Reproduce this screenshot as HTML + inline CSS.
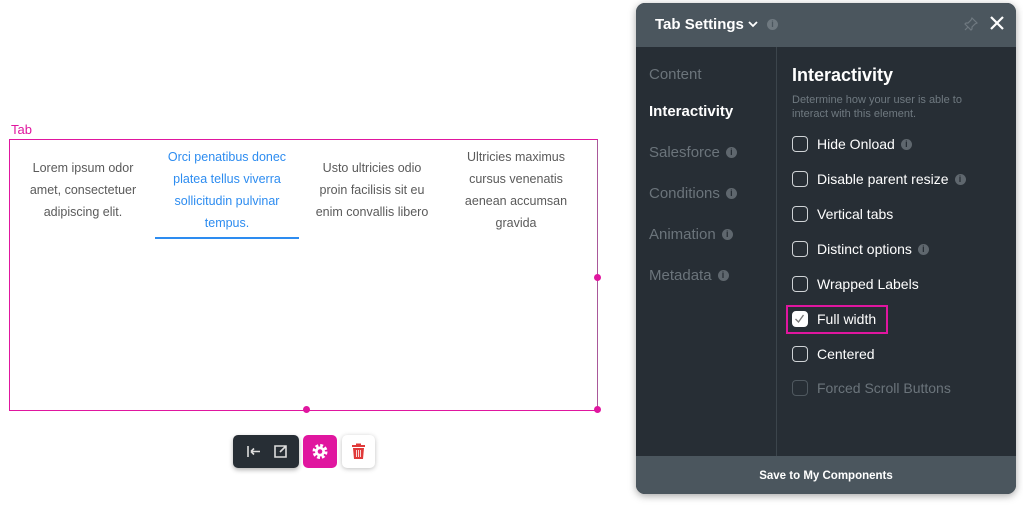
<!DOCTYPE html>
<html><head><style>
*{margin:0;padding:0;box-sizing:border-box}
body{width:1023px;height:506px;background:#fff;font-family:"Liberation Sans",sans-serif;position:relative;overflow:hidden}
.abs{position:absolute}
.tabtxt{position:absolute;text-align:center;font-size:12.5px;line-height:22px;color:#5a5a5a}
.panel{left:636px;top:3px;width:380px;height:491px;background:#272e35;border-radius:9px;overflow:hidden;box-shadow:0 2px 8px rgba(0,0,0,.35)}
.nav{position:absolute;left:13px;font-size:15px;color:#6b747b}
.info{display:inline-block;width:11px;height:11px;border-radius:50%;background:#5f676e;color:#272e35;font-size:9px;line-height:11px;text-align:center;font-weight:bold;vertical-align:2px;margin-left:6px}
.opt{position:absolute;left:156px;font-size:14px;color:#fff;height:20px;line-height:20px}
.cb{position:absolute;left:0;top:2px;width:16px;height:16px;border:1.5px solid #cfd3d6;border-radius:4px}
.opt span.t{position:absolute;left:25px;white-space:nowrap}
</style></head><body>
<div class="abs" style="left:11px;top:122px;font-size:13px;color:#e0169f">Tab</div>
<div class="abs" style="left:9px;top:139px;width:589px;height:272px;border:1px solid #e0169f;border-right-color:#a9589a"></div>
<div class="abs" style="left:594px;top:274px;width:7px;height:7px;border-radius:50%;background:#e0169f"></div>
<div class="abs" style="left:303px;top:406px;width:7px;height:7px;border-radius:50%;background:#e0169f"></div>
<div class="abs" style="left:594px;top:406px;width:7px;height:7px;border-radius:50%;background:#e0169f"></div>
<div class="tabtxt" style="left:10px;top:157px;width:146px">Lorem ipsum odor<br>amet, consectetuer<br>adipiscing elit.</div>
<div class="tabtxt" style="left:155px;top:146px;width:144px;color:#2d8cf0">Orci penatibus donec<br>platea tellus viverra<br>sollicitudin pulvinar<br>tempus.</div>
<div class="abs" style="left:155px;top:237px;width:144px;height:2px;background:#2d8cf0"></div>
<div class="tabtxt" style="left:299px;top:157px;width:146px">Usto ultricies odio<br>proin facilisis sit eu<br>enim convallis libero</div>
<div class="tabtxt" style="left:443px;top:146px;width:146px">Ultricies maximus<br>cursus venenatis<br>aenean accumsan<br>gravida</div>

<div class="abs" style="left:233px;top:435px;width:66px;height:33px;background:#272e35;border-radius:5px;box-shadow:0 2px 5px rgba(0,0,0,.3)">
<svg width="66" height="33" viewBox="0 0 66 33" fill="none" stroke="#ddd" stroke-width="1.6"><path d="M15 11v11M18 16.5h9M18 16.5l3-3M18 16.5l3 3"/><path d="M48 11h-6v11h11v-6M47 11h6v6M53 11l-6 6"/></svg></div>
<div class="abs" style="left:303px;top:435px;width:34px;height:33px;background:#e0169f;border-radius:5px">
<svg width="34" height="33" viewBox="0 0 34 33"><circle cx="17" cy="16.5" r="5.5" fill="none" stroke="#fff" stroke-width="4" stroke-dasharray="2.6 1.72"/><circle cx="17" cy="16.5" r="5" fill="#fff"/><circle cx="17" cy="16.5" r="2.3" fill="#e0169f"/></svg></div>
<div class="abs" style="left:342px;top:435px;width:33px;height:33px;background:#fff;border-radius:5px;box-shadow:0 1px 5px rgba(0,0,0,.25)">
<svg width="33" height="33" viewBox="0 0 33 33"><rect x="10" y="10" width="13" height="2" fill="#e03a3a"/><rect x="14" y="8.5" width="5" height="2" fill="#e03a3a"/><path d="M11 13h11l-1 11h-9z" fill="#e03a3a"/><path d="M14.5 15v7M16.5 15v7M18.5 15v7" stroke="#fff" stroke-width=".8"/></svg></div>

<div class="abs panel">
<div class="abs" style="left:0;top:0;width:380px;height:44px;background:#4b565e"></div>
<div class="abs" style="left:19px;top:13px;font-size:15px;font-weight:bold;color:#fff">Tab Settings</div>
<svg class="abs" style="left:112px;top:18px" width="10" height="7"><path d="M1 1l4 4 4-4" stroke="#fff" stroke-width="1.8" fill="none"/></svg>
<span class="info abs" style="left:131px;top:16px;background:#6f7980;color:#4b565e;margin:0">i</span>
<svg class="abs" style="left:328px;top:14px" width="14" height="14"><path d="M8 1l5 5-2 1-3 3 0 2-1 1-6-6 1-1 2 0 3-3z M4 10l-3 3" stroke="#6f7980" stroke-width="1.2" fill="none"/></svg>
<svg class="abs" style="left:354px;top:13px" width="14" height="14"><path d="M1 1l12 12M13 1L1 13" stroke="#fff" stroke-width="2.2"/></svg>
<div class="abs" style="left:140px;top:44px;width:1px;height:409px;background:#3c454c"></div>
<div class="nav" style="top:63px">Content</div>
<div class="nav" style="top:100px;color:#fff;font-weight:bold">Interactivity</div>
<div class="nav" style="top:141px">Salesforce<span class="info">i</span></div>
<div class="nav" style="top:182px">Conditions<span class="info">i</span></div>
<div class="nav" style="top:223px">Animation<span class="info">i</span></div>
<div class="nav" style="top:264px">Metadata<span class="info">i</span></div>
<div class="abs" style="left:156px;top:62px;font-size:18px;font-weight:bold;color:#fff">Interactivity</div>
<div class="abs" style="left:156px;top:90px;font-size:11px;line-height:14px;color:#6f7980">Determine how your user is able to<br>interact with this element.</div>
<div class="opt" style="top:131px"><div class="cb"></div><span class="t">Hide Onload<span class="info">i</span></span></div>
<div class="opt" style="top:166px"><div class="cb"></div><span class="t">Disable parent resize<span class="info">i</span></span></div>
<div class="opt" style="top:201px"><div class="cb"></div><span class="t">Vertical tabs</span></div>
<div class="opt" style="top:236px"><div class="cb"></div><span class="t">Distinct options<span class="info">i</span></span></div>
<div class="opt" style="top:271px"><div class="cb"></div><span class="t">Wrapped Labels</span></div>
<div class="abs" style="left:150px;top:302px;width:102px;height:29px;border:2px solid #e0169f"></div>
<div class="opt" style="top:306px"><div class="cb" style="background:#fff;border-color:#fff"><svg width="13" height="13" style="position:absolute;left:0;top:0"><path d="M2.5 7l3 3 5-7" stroke="#777" stroke-width="1.3" fill="none"/></svg></div><span class="t">Full width</span></div>
<div class="opt" style="top:341px"><div class="cb"></div><span class="t">Centered</span></div>
<div class="opt" style="top:375px;color:#6b747b"><div class="cb" style="border-color:#4f585f"></div><span class="t">Forced Scroll Buttons</span></div>
<div class="abs" style="left:0;top:453px;width:380px;height:38px;background:#4b565e;color:#fff;font-size:11.5px;font-weight:bold;text-align:center;line-height:40px">Save to My Components</div>
</div>
</body></html>
